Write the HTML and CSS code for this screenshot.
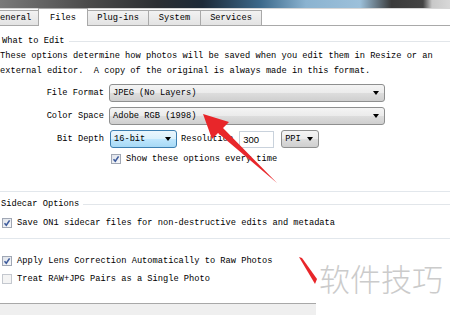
FILE: index.html
```html
<!DOCTYPE html>
<html lang="en">

<head>
    <meta charset="UTF-8">
    <title>Preferences - Files</title>
    <link rel="stylesheet" href="styles.css">
</head>

<body>
    <div class="topbar"></div>

    <div class="tabs">
        <div class="tab first">eneral</div>
        <div class="tab active">Files</div>
        <div class="tab">Plug-ins</div>
        <div class="tab">System</div>
        <div class="tab">Services</div>
    </div>

    <div class="panel">
        <div class="group-head"><span>What to Edit</span><i class="line"></i></div>
        <p class="desc">These options determine how photos will be saved when you edit them in Resize or an<br>external editor.  A copy of the original is always made in this format.</p>

        <div class="form">
            <label class="lbl">File Format</label>
            <div class="select wide"><span>JPEG (No Layers)</span><i class="caret"></i></div>

            <label class="lbl">Color Space</label>
            <div class="select wide"><span>Adobe RGB (1998)</span><i class="caret"></i></div>

            <label class="lbl">Bit Depth</label>
            <div class="inline">
                <div class="select focus bits"><span>16-bit</span><i class="caret"></i></div>
                <span class="res-lbl">Resolution</span>
                <div class="field">300</div>
                <div class="select ppi"><span>PPI</span><i class="caret"></i></div>
            </div>

            <span></span>
            <div class="check-row">
                <span class="box checked"><svg viewBox="0 0 8 8"><path d="M1.5 4.2 L3.3 6.2 L6.6 1.4" /></svg></span>
                <span>Show these options every time</span>
            </div>
        </div>

        <div class="rule rule-1"></div>

        <div class="group-head sidecar"><span>Sidecar Options</span><i class="line"></i></div>
        <div class="check-row opt save">
            <span class="box checked"><svg viewBox="0 0 8 8"><path d="M1.5 4.2 L3.3 6.2 L6.6 1.4" /></svg></span>
            <span>Save ON1 sidecar files for non-destructive edits and metadata</span>
        </div>

        <div class="rule rule-2"></div>

        <div class="check-row opt lens">
            <span class="box checked"><svg viewBox="0 0 8 8"><path d="M1.5 4.2 L3.3 6.2 L6.6 1.4" /></svg></span>
            <span>Apply Lens Correction Automatically to Raw Photos</span>
        </div>
        <div class="check-row opt pairs">
            <span class="box"></span>
            <span>Treat RAW+JPG Pairs as a Single Photo</span>
        </div>

        <div class="footer"></div>
    </div>

    <!-- watermark patch and the red annotation arrows drawn over the dialog -->
    <div class="watermark">软件技巧</div>
    <svg class="marks" width="450" height="315" viewBox="0 0 450 315">
        <polygon fill="#e8262a" points="203,114 229,122 223,128 277,183 218,133 212,139" />
        <polygon fill="#e8262a" points="299,257 302,258 317,279 315,284" />
    </svg>
</body>

</html>
```

FILE: styles.css
```css
body {
    margin: 0;
    width: 450px;
    height: 315px;
    overflow: hidden;
    position: relative;
    background-color: #fff;
    font-family: "Liberation Mono", "DejaVu Sans Mono", monospace;
    font-size: 8.7px;
    color: #000;
}

.topbar {
    height: 9px;
    background: linear-gradient(to right, #7a7a7a 0%, #4a4a4a 20%, #2c2f33 35%, #1d2a38 45%, #3d6a8c 58%, #8bb3d0 68%, #9cc0da 80%, #3a3a3a 87%, #444 94%, #c8c8c8 96%, #d8d8d8 100%);
    border-bottom: 1px solid #d6d6d6;
    box-sizing: border-box;
}

.tabs {
    display: flex;
    align-items: flex-end;
    height: 17px;
    border-bottom: 1px solid #a9a9a9;
    box-sizing: border-box;
    background-color: #fff;
}

.tab {
    display: flex;
    align-items: center;
    justify-content: center;
    height: 14px;
    border: 1px solid #a9a9a9;
    border-bottom: none;
    background: linear-gradient(#f2f2f2, #e3e3e3);
    box-sizing: content-box;
    margin-left: -1px;
}

.tab.first {
    width: 38px;
    margin-left: 0;
    border-left: none;
    justify-content: flex-start;
}

.tab.active {
    width: 48px;
    height: 17px;
    margin-bottom: -1px;
    background: #fff;
}

.tab:nth-child(3) {
    width: 60px;
}

.tab:nth-child(4) {
    width: 51px;
}

.tab:nth-child(5) {
    width: 60px;
}

.panel {
    display: flex;
    flex-direction: column;
}

.group-head {
    display: flex;
    align-items: center;
    gap: 4px;
    height: 12px;
    margin-top: 9px;
    padding-left: 2px;
}

.group-head .line {
    flex: 1;
    height: 1px;
    background-color: #e2e6ea;
}

.desc {
    margin: 2px 0 0 0;
    line-height: 15px;
    white-space: pre;
}

.form {
    display: grid;
    grid-template-columns: 104px 276px;
    column-gap: 5px;
    row-gap: 5px;
    margin-top: 5px;
    align-items: center;
}

.lbl {
    text-align: right;
}

.select {
    display: flex;
    align-items: center;
    justify-content: space-between;
    height: 18px;
    padding: 0 5px 0 3px;
    border: 1px solid #8e8f8f;
    border-radius: 3px;
    background: linear-gradient(#f4f4f4 0%, #ebebeb 50%, #dddddd 51%, #cfcfcf 100%);
    box-sizing: border-box;
}

.select.focus {
    border-color: #3c7fb1;
    background: linear-gradient(#eaf6fd 0%, #d9f0fc 50%, #bee6fd 51%, #a7d9f5 100%);
}

.caret {
    width: 0;
    height: 0;
    border-left: 3px solid transparent;
    border-right: 3px solid transparent;
    border-top: 4px solid #000;
}

.inline {
    display: flex;
    align-items: center;
}

.bits {
    width: 67px;
    margin-left: 1px;
}

.res-lbl {
    margin-left: 4px;
}

.field {
    width: 35px;
    height: 17px;
    margin-left: 6px;
    padding-left: 3px;
    border: 1px solid #c9d2dc;
    box-sizing: border-box;
    line-height: 15px;
    font-family: "Liberation Sans", Arial, sans-serif;
    font-size: 9.5px;
}

.ppi {
    width: 38px;
    margin-left: 7px;
}

.check-row {
    display: flex;
    align-items: center;
    gap: 5px;
    height: 12px;
}

.form .check-row {
    margin-left: 2px;
}

.box {
    display: flex;
    align-items: center;
    justify-content: center;
    width: 10px;
    height: 10px;
    border: 1px solid #a0a7b4;
    background: linear-gradient(135deg, #dfe3ea, #f8f9fb);
    box-sizing: border-box;
}

.box svg {
    width: 8px;
    height: 8px;
}

.box path {
    fill: none;
    stroke: #3d5b9c;
    stroke-width: 1.6;
}

.rule {
    height: 1px;
    background-color: #e2e7ec;
}

.rule-1 {
    margin-top: 26px;
}

.sidecar {
    margin-top: 6px;
    padding-left: 1px;
}

.opt {
    padding-left: 2px;
}

.save {
    margin-top: 7px;
}

.rule-2 {
    margin-top: 9px;
}

.lens {
    margin-top: 16px;
}

.pairs {
    margin-top: 6px;
}

.pairs .box {
    border-color: #c4c8cf;
    background: #f4f4f4;
}

.footer {
    width: 316px;
    height: 13px;
    margin-top: 18px;
    border-top: 1px solid #a8a8a8;
    background-color: #efefef;
}

.watermark {
    position: absolute;
    left: 316px;
    top: 246px;
    width: 134px;
    height: 69px;
    padding: 14px 0 0 3px;
    box-sizing: border-box;
    background-color: #fff;
    font-family: "Noto Sans CJK SC", sans-serif;
    font-weight: 300;
    font-size: 31px;
    line-height: 36px;
    color: #cbcbcb;
    white-space: nowrap;
}

.marks {
    position: absolute;
    left: 0;
    top: 0;
    pointer-events: none;
}
```
